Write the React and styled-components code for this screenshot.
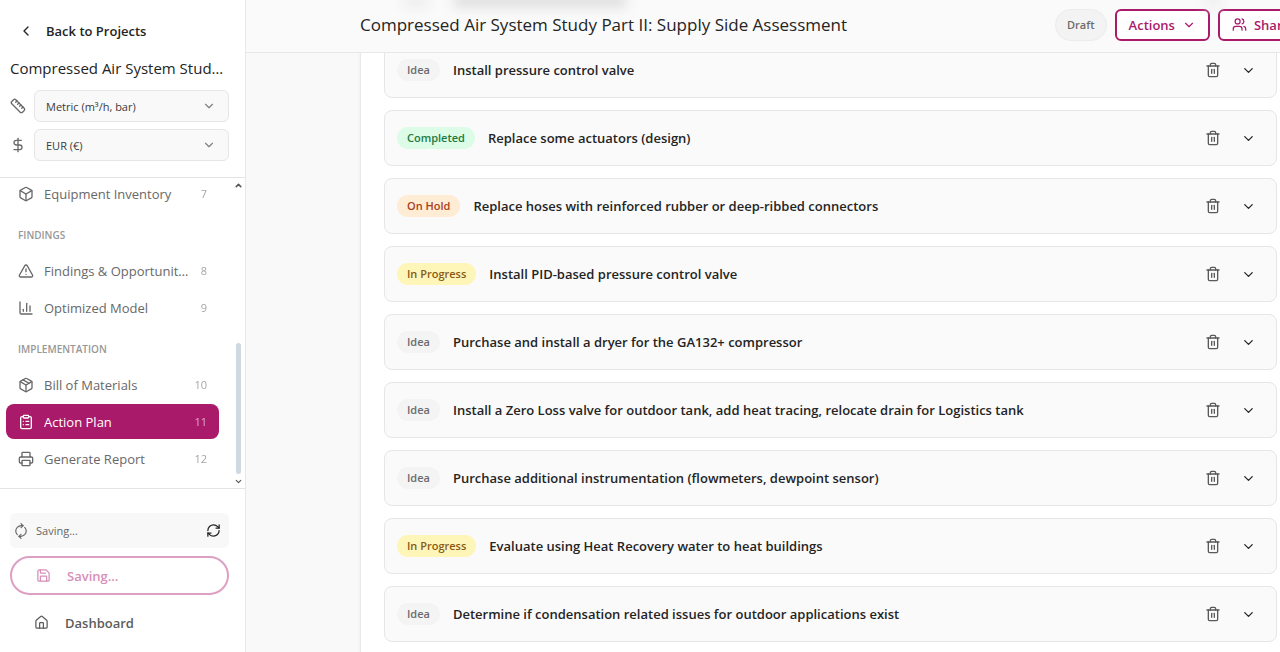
/* eslint-disable react/prop-types */
import styled, { createGlobalStyle } from "styled-components";
import {
  Box,
  ChartColumn,
  ChevronDown,
  ChevronLeft,
  ChevronUp,
  ClipboardList,
  DollarSign,
  House,
  Package,
  Printer,
  RefreshCw,
  Ruler,
  Save,
  Trash2,
  TriangleAlert,
  Users,
} from "lucide-react";

const accent = "#aa1a6b";

const navGroups = [
  { items: [{ icon: Box, label: "Equipment Inventory", count: 7 }] },
  {
    title: "Findings",
    items: [
      { icon: TriangleAlert, label: "Findings & Opportunities", count: 8 },
      { icon: ChartColumn, label: "Optimized Model", count: 9 },
    ],
  },
  {
    title: "Implementation",
    items: [
      { icon: Package, label: "Bill of Materials", count: 10 },
      { icon: ClipboardList, label: "Action Plan", count: 11, active: true },
      { icon: Printer, label: "Generate Report", count: 12 },
    ],
  },
];

const actions = [
  { status: "Idea", title: "Install pressure control valve" },
  { status: "Completed", title: "Replace some actuators (design)" },
  { status: "On Hold", title: "Replace hoses with reinforced rubber or deep-ribbed connectors" },
  { status: "In Progress", title: "Install PID-based pressure control valve" },
  { status: "Idea", title: "Purchase and install a dryer for the GA132+ compressor" },
  { status: "Idea", title: "Install a Zero Loss valve for outdoor tank, add heat tracing, relocate drain for Logistics tank" },
  { status: "Idea", title: "Purchase additional instrumentation (flowmeters, dewpoint sensor)" },
  { status: "In Progress", title: "Evaluate using Heat Recovery water to heat buildings" },
  { status: "Idea", title: "Determine if condensation related issues for outdoor applications exist" },
];

const statusColors = {
  Idea: { bg: "#f4f4f4", fg: "#6c6c6c" },
  Completed: { bg: "#dcfce7", fg: "#217a41" },
  "On Hold": { bg: "#ffecd4", fg: "#a8401c" },
  "In Progress": { bg: "#fef6b8", fg: "#8a5a14" },
};

const GlobalStyle = createGlobalStyle`
  * {
    box-sizing: border-box;
  }

  body {
    margin: 0;
    overflow: hidden;
    background: #f9f9f9;
    color: #242424;
    font-family: "Open Sans", "Noto Sans", sans-serif;
    font-size: 13px;
  }

  button,
  select {
    font: inherit;
    color: inherit;
  }

  button {
    padding: 0;
    border: 0;
    background: none;
    cursor: pointer;
  }

  svg {
    flex: none;
  }
`;

const Page = styled.div`
  display: flex;
  height: 100vh;
`;

const Sidebar = styled.aside`
  display: flex;
  flex-direction: column;
  flex: none;
  width: 246px;
  background: #fff;
  border-right: 1px solid #e8e8e8;
`;

const SidebarTop = styled.div`
  display: flex;
  flex-direction: column;
  padding: 20px 16px 16px 10px;
`;

const BackLink = styled.a`
  display: flex;
  align-items: center;
  gap: 12px;
  padding-left: 8px;
  height: 22px;
  color: inherit;
  font-weight: 600;
  text-decoration: none;
`;

const ProjectName = styled.h2`
  margin: 15px 0 11px;
  overflow: hidden;
  font-size: 15px;
  font-weight: 500;
  line-height: 22px;
  text-overflow: ellipsis;
  white-space: nowrap;
`;

const SettingRow = styled.label`
  display: flex;
  align-items: center;
  gap: 8px;
  color: #6a6a6a;

  & + & {
    margin-top: 7px;
  }
`;

const SelectBox = styled.span`
  display: grid;
  flex: 1;
  align-items: center;

  > * {
    grid-area: 1 / 1;
  }

  svg {
    justify-self: end;
    margin-right: 13px;
    color: #808080;
    pointer-events: none;
  }
`;

const Select = styled.select`
  width: 100%;
  height: 32px;
  padding: 0 11px;
  appearance: none;
  background: #f9f9f9;
  border: 1px solid #e6e6e6;
  border-radius: 6px;
  color: #3a3a3a;
  font-size: 11px;
`;

const NavArea = styled.div`
  display: flex;
  flex: 1;
  min-height: 0;
  border-top: 1px solid #e4e4e4;
  border-bottom: 1px solid #e4e4e4;
`;

const Nav = styled.nav`
  display: flex;
  flex: 1;
  flex-direction: column;
  justify-content: flex-end;
  gap: 2px;
  min-width: 0;
  padding: 0 12px 12px 6px;
  overflow: hidden;
`;

const NavHeading = styled.h3`
  margin: 14px 12px 8px;
  color: #979797;
  font-size: 10px;
  font-weight: 600;
  line-height: 16px;
  text-transform: uppercase;
`;

const NavLink = styled.a`
  display: flex;
  flex: none;
  align-items: center;
  gap: 10px;
  height: 35px;
  padding: 0 12px;
  border-radius: 8px;
  background: ${({ $active }) => ($active ? accent : "transparent")};
  color: ${({ $active }) => ($active ? "#fff" : "#686868")};
  text-decoration: none;
`;

const NavLabel = styled.span`
  flex: 1;
  overflow: hidden;
  text-overflow: ellipsis;
  white-space: nowrap;
`;

const NavCount = styled.span`
  font-size: 11px;
  opacity: 0.6;
`;

const ScrollTrack = styled.div`
  display: flex;
  flex-direction: column;
  align-items: center;
  justify-content: space-between;
  flex: none;
  width: 14px;
  padding: 3px 0 2px;
  color: #555;
`;

const ScrollThumb = styled.div`
  width: 5px;
  height: 131px;
  margin: auto 0 3px;
  border-radius: 3px;
  background: #cfd9e2;
`;

const SidebarBottom = styled.div`
  display: flex;
  flex-direction: column;
  gap: 8px;
  padding: 24px 16px 10px 10px;
`;

const SaveStatus = styled.div`
  display: flex;
  align-items: center;
  gap: 8px;
  height: 35px;
  padding: 0 8px 0 4px;
  border-radius: 6px;
  background: #f8f8f8;
  color: #666;
  font-size: 11px;

  button {
    display: flex;
    margin-left: auto;
    color: #222;
  }
`;

const Spinner = styled(RefreshCw)`
  transform: rotate(-45deg);
`;

const SaveButton = styled.button`
  && {
    display: flex;
    align-items: center;
    gap: 16px;
    height: 39px;
    padding: 0 24px;
    border: 2px solid #dd9fc3;
    border-radius: 20px;
    color: #d78fb8;
    font-weight: 600;
  }
`;

const HomeLink = styled.a`
  display: flex;
  align-items: center;
  gap: 16px;
  height: 39px;
  padding: 0 24px;
  color: #5c5c5c;
  font-weight: 600;
  text-decoration: none;
`;

const Main = styled.main`
  display: flex;
  flex: 1;
  flex-direction: column;
  min-width: 0;
  overflow: hidden;
`;

const Header = styled.header`
  position: relative;
  z-index: 1;
  display: flex;
  flex: none;
  align-items: center;
  gap: 8px;
  height: 53px;
  margin-right: -24px;
  padding: 0 0 3px 114px;
  overflow: hidden;
  background: #fafafa;
  border-bottom: 1px solid #e8e8e8;
`;

// Soft trace of a row passing behind the header
const Ghost = styled.span`
  position: absolute;
  top: -5px;
  left: ${({ $left }) => $left}px;
  width: ${({ $width }) => $width}px;
  height: 12px;
  background: ${({ $faint }) => ($faint ? "#ececec" : "#dcdcdc")};
  filter: blur(6px);
`;

const PageTitle = styled.h1`
  position: relative;
  flex: 1;
  margin: 0;
  font-size: 17px;
  font-weight: 500;
  line-height: 24px;
  white-space: nowrap;
`;

const DraftBadge = styled.span`
  display: flex;
  align-items: center;
  height: 32px;
  padding: 0 11px;
  border: 1px solid #ececec;
  border-radius: 16px;
  background: #f3f3f3;
  color: #6c6c6c;
  font-size: 11px;
  font-weight: 600;
`;

const OutlineButton = styled.button`
  && {
    display: flex;
    align-items: center;
    gap: 7px;
    height: 32px;
    padding: 0 12px;
    border: 2px solid ${accent};
    border-radius: 6px;
    background: #fff;
    color: ${accent};
    font-weight: 600;
  }
`;

const Panel = styled.section`
  flex: none;
  margin: -12px -21px 0 114px;
  padding: 0 23px;
  background: #fff;
  border: 1px solid #e8e8e8;
  box-shadow: 0 0 4px rgba(0, 0, 0, 0.05);
`;

const ActionList = styled.ul`
  display: flex;
  flex-direction: column;
  gap: 12px;
  margin: 0;
  padding: 0 0 24px;
  list-style: none;
`;

const ActionCard = styled.li`
  display: flex;
  align-items: center;
  gap: 13px;
  height: 56px;
  padding: 0 20px 0 12px;
  border: 1px solid #e6e6e6;
  border-radius: 8px;
  background: #fafafa;
`;

const StatusPill = styled.span`
  padding: 0 10px;
  border-radius: 11px;
  background: ${({ $status }) => statusColors[$status].bg};
  color: ${({ $status }) => statusColors[$status].fg};
  font-size: 11px;
  font-weight: 600;
  line-height: 22px;
`;

const ActionTitle = styled.span`
  flex: 1;
  font-weight: 600;
  white-space: nowrap;
`;

const IconButton = styled.button`
  && {
    display: flex;
    margin-left: ${({ $spaced }) => ($spaced ? 7 : 0)}px;
    color: ${({ $spaced }) => ($spaced ? "#222" : "#5a5a5a")};
  }
`;

function NavGroup({ group }) {
  return (
    <>
      {group.title && <NavHeading>{group.title}</NavHeading>}
      {group.items.map(({ icon: Icon, label, count, active }) => (
        <NavLink key={label} href="#" $active={active}>
          <Icon size={16} />
          <NavLabel>{label}</NavLabel>
          <NavCount>{count}</NavCount>
        </NavLink>
      ))}
    </>
  );
}

function Setting({ icon: Icon, name, value }) {
  return (
    <SettingRow>
      <Icon size={16} />
      <SelectBox>
        <Select aria-label={name} defaultValue={value}>
          <option>{value}</option>
        </Select>
        <ChevronDown size={14} />
      </SelectBox>
    </SettingRow>
  );
}

function ActionRow({ action }) {
  return (
    <ActionCard>
      <StatusPill $status={action.status}>{action.status}</StatusPill>
      <ActionTitle>{action.title}</ActionTitle>
      <IconButton aria-label="Delete">
        <Trash2 size={16} />
      </IconButton>
      <IconButton aria-label="Expand" $spaced>
        <ChevronDown size={15} />
      </IconButton>
    </ActionCard>
  );
}

function App() {
  return (
    <Page>
      <GlobalStyle />
      <Sidebar>
        <SidebarTop>
          <BackLink href="#">
            <ChevronLeft size={16} />
            Back to Projects
          </BackLink>
          <ProjectName>Compressed Air System Study Part II: Supply Side Assessment</ProjectName>
          <Setting icon={Ruler} name="Units" value="Metric (m³/h, bar)" />
          <Setting icon={DollarSign} name="Currency" value="EUR (€)" />
        </SidebarTop>
        <NavArea>
          <Nav>
            {navGroups.map((group, index) => (
              <NavGroup key={index} group={group} />
            ))}
          </Nav>
          <ScrollTrack>
            <ChevronUp size={9} strokeWidth={4} />
            <ScrollThumb />
            <ChevronDown size={9} strokeWidth={3} />
          </ScrollTrack>
        </NavArea>
        <SidebarBottom>
          <SaveStatus>
            <Spinner size={14} />
            Saving...
            <button aria-label="Sync now">
              <RefreshCw size={15} />
            </button>
          </SaveStatus>
          <SaveButton>
            <Save size={15} />
            Saving...
          </SaveButton>
          <HomeLink href="#">
            <House size={15} />
            Dashboard
          </HomeLink>
        </SidebarBottom>
      </Sidebar>
      <Main>
        <Header>
          <Ghost $left={158} $width={24} $faint />
          <Ghost $left={208} $width={172} />
          <Ghost $left={960} $width={14} $faint />
          <PageTitle>Compressed Air System Study Part II: Supply Side Assessment</PageTitle>
          <DraftBadge>Draft</DraftBadge>
          <OutlineButton>
            Actions
            <ChevronDown size={14} />
          </OutlineButton>
          <OutlineButton>
            <Users size={15} />
            Share
          </OutlineButton>
        </Header>
        <Panel>
          <ActionList>
            {actions.map((action) => (
              <ActionRow key={action.title} action={action} />
            ))}
          </ActionList>
        </Panel>
      </Main>
    </Page>
  );
}

export default App;
